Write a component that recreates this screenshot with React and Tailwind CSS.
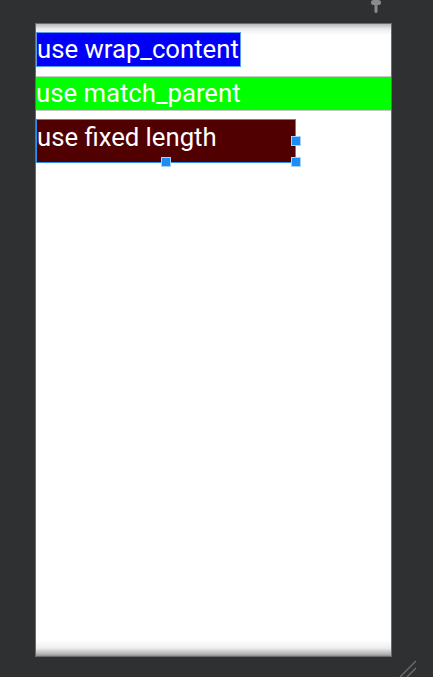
export default function App() {
  return (
    <div className="w-[433px] h-[677px] bg-[#2f3032] relative overflow-hidden" style={{ fontFamily: "Roboto, 'Noto Sans', sans-serif" }}>
      {/* top pin icon */}
      <svg className="absolute left-[369px] top-0" width="14" height="14" viewBox="0 0 14 14">
        <rect x="5.5" y="0" width="3" height="13" rx="1.5" fill="#8a8b8d" />
        <rect x="2" y="0" width="10" height="5" rx="2.5" fill="#8a8b8d" />
      </svg>
      {/* resize corner */}
      <svg className="absolute left-[398px] top-[657px]" width="20" height="20" viewBox="0 0 20 20">
        <line x1="2" y1="20" x2="18" y2="4" stroke="#6e6f71" strokeWidth="1.2" />
        <line x1="9" y1="20" x2="18" y2="11" stroke="#6e6f71" strokeWidth="1.2" />
      </svg>
      <div className="absolute left-[35px] top-[23px] w-[357px] h-[634px] border border-[#6a6b6d] bg-[linear-gradient(to_bottom,#b8b8b8_0px,#ececec_5px,#ffffff_11px,#ffffff_calc(100%-16px),#eeeeee_calc(100%-8px),#b4b4b4_calc(100%-2px),#8f8f8f_100%)]">
        <div className="flex flex-col pt-[8px] text-white text-[25.7px]">
          <div className="w-[205px] h-[35px] bg-[#0000fa] border border-[#5a9de6] flex items-center leading-none whitespace-nowrap">
            <span>use wrap_content</span>
          </div>
          <div className="mt-[9px] w-full h-[35px] bg-[#00ff00] border-y border-[#c8c8c8] flex items-center leading-none whitespace-nowrap">
            <span>use match_parent</span>
          </div>
          <div className="relative mt-[8px] w-[260px] h-[44px] bg-[#500000] border border-[#2d8ff0] leading-none whitespace-nowrap">
            <span className="block pt-[5px]">use fixed length</span>
            <div className="absolute left-[254px] top-[16px] w-[10px] h-[10px] bg-[#1e8cf5] border border-white/60" />
            <div className="absolute left-[124px] top-[37px] w-[10px] h-[10px] bg-[#1e8cf5] border border-white/60" />
            <div className="absolute left-[254px] top-[37px] w-[10px] h-[10px] bg-[#1e8cf5] border border-white/60" />
          </div>
        </div>
      </div>
    </div>
  );
}
